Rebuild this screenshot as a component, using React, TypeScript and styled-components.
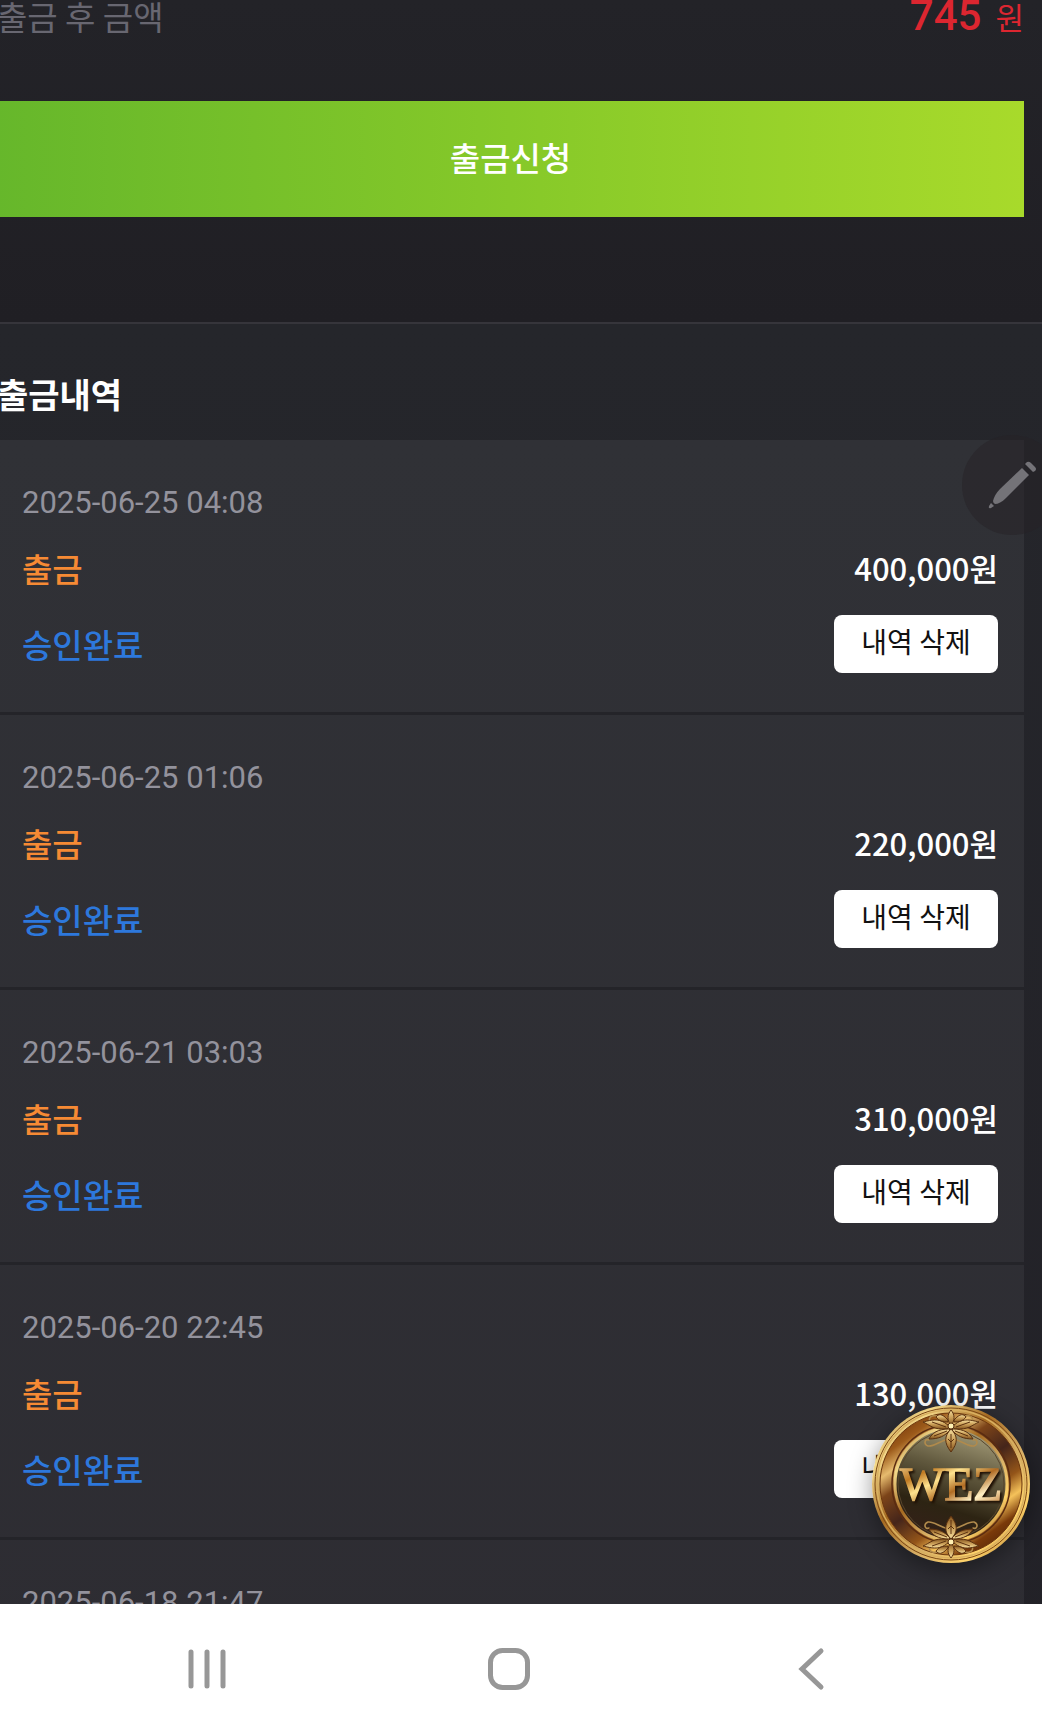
import React from "react";
import styled, { createGlobalStyle } from "styled-components";

const sans = `"Noto Sans CJK KR", "Noto Sans", sans-serif`;
const latin = `Roboto, "Noto Sans CJK KR", sans-serif`;

const GlobalStyle = createGlobalStyle`
  *, *::before, *::after { box-sizing: border-box; }
  body { margin: 0; background: #232429; font-family: ${sans}; }
  button { font: inherit; border: 0; padding: 0; cursor: pointer; }
`;

const Screen = styled.div`
  display: flex;
  flex-direction: column;
  height: 100vh;
  overflow: hidden;
`;

const Stage = styled.main`
  position: relative;
  flex: 1;
  min-height: 0;
  overflow: hidden;
  background: #232429;
`;

/* The page is panned slightly past its left edge. */
const Page = styled.div`
  margin-left: -3px;
`;

const RequestPanel = styled.section`
  display: flex;
  flex-direction: column;
  padding: 0 18px 105px 0;
  background: linear-gradient(#232328, #201f24);
  border-bottom: 2px solid #36353b;
`;

const BalanceRow = styled.div`
  display: flex;
  align-items: center;
  justify-content: space-between;
  height: 32px;
  margin-bottom: 69px;
`;

const BalanceLabel = styled.span`
  font-size: 33px;
  line-height: 32px;
  color: #686771;
`;

const Balance = styled.strong`
  font-family: ${latin};
  font-size: 42px;
  line-height: 28px;
  font-weight: 500;
  color: #dc2630;
`;

const BalanceUnit = styled.span`
  margin-left: 14px;
  font-family: ${sans};
  font-size: 31px;
  font-weight: 400;
`;

const SubmitButton = styled.button`
  height: 116px;
  padding-bottom: 4px;
  background: linear-gradient(90deg, #66b72b, #86c929 50%, #a8da2b);
  color: #fff;
  font-size: 33px;
  font-weight: 500;
`;

const HistoryPanel = styled.section`
  padding-right: 18px;
  background: linear-gradient(#25262b, #222127);
`;

const HistoryTitle = styled.h2`
  margin: 0;
  padding: 46px 0 22px;
  font-size: 34px;
  line-height: 48px;
  font-weight: 700;
  color: #fff;
`;

const HistoryList = styled.ul`
  margin: 0;
  padding: 0;
  list-style: none;
  background: linear-gradient(#303136, #2d2c32);
`;

const HistoryItem = styled.li`
  display: flex;
  flex-direction: column;
  gap: 22px;
  padding: 44px 26px 38px 25px;
  border-bottom: 3px solid #242429;
`;

const DateText = styled.time`
  font-family: ${latin};
  font-size: 31px;
  line-height: 38px;
  color: #93929c;
`;

const ItemRow = styled.div<{ $height: number }>`
  display: flex;
  align-items: center;
  justify-content: space-between;
  height: ${(p) => p.$height}px;
  font-size: 33px;
  line-height: 48px;
  font-weight: 500;
`;

const Kind = styled.span`
  color: #f68a34;
`;

const Status = styled.span`
  color: #2d78dc;
`;

const Amount = styled.span`
  font-size: 31px;
  color: #fff;
`;

const DeleteButton = styled.button`
  width: 164px;
  height: 58px;
  padding-bottom: 6px;
  border-radius: 8px;
  background: #fff;
  color: #111;
  font-size: 28px;
  font-weight: 400;
  line-height: 40px;
`;

const PenButton = styled.button`
  position: absolute;
  top: 435px;
  right: -20px;
  width: 100px;
  height: 100px;
  border-radius: 50%;
  background: rgba(38, 34, 37, 0.5);
`;

const LogoButton = styled.button`
  position: absolute;
  right: 12px;
  bottom: 41px;
  width: 158px;
  height: 158px;
  border-radius: 50%;
  background: none;
  box-shadow: 0 6px 24px rgba(0, 0, 0, 0.4);
`;

const Drawing = styled.svg`
  display: block;
  width: 100%;
  height: 100%;
  overflow: visible;
`;

const Monogram = styled.text`
  font-family: "Liberation Serif", serif;
  font-size: 47px;
  text-anchor: middle;
  filter: drop-shadow(2px 2px 1px #1f1004);
`;

const NavBar = styled.nav`
  display: grid;
  grid-template-columns: repeat(3, 1fr);
  flex: none;
  height: 126px;
  padding: 4px 80px 0 56px;
  background: #fff;
`;

const NavButton = styled.button`
  display: grid;
  place-items: center;
  background: none;
  color: #979797;
`;

const NavIcon = styled.svg`
  width: 44px;
  height: 44px;
  fill: none;
  stroke: currentColor;
  stroke-width: 5;
`;

const withdrawals = [
  { date: "2025-06-25 04:08", amount: "400,000원" },
  { date: "2025-06-25 01:06", amount: "220,000원" },
  { date: "2025-06-21 03:03", amount: "310,000원" },
  { date: "2025-06-20 22:45", amount: "130,000원" },
  { date: "2025-06-18 21:47", amount: "150,000원" },
];

function Ornament() {
  return (
    <g stroke="#5a3110" strokeWidth="1">
      <g fill="none" stroke="#b08a4c" strokeWidth="1.6" strokeLinecap="round">
        <path d="M77 34C67 36 62 42 56 41C51 39 53 33 57 35M81 34C91 36 96 42 102 41C107 39 105 33 101 35" />
        <path d="M71 14C63 8 55 11 58 17M87 14C95 8 103 11 100 17" />
      </g>
      <path d="M78 22C68 12 60 15 51 17C58 20 61 25 75 24ZM80 22C90 12 98 15 107 17C100 20 97 25 83 24Z" fill="url(#leaf)" />
      <path d="M77 24C66 24 60 28 57 34C67 34 73 31 78 25ZM81 24C92 24 98 28 101 34C91 34 85 31 80 25Z" fill="url(#leaf)" />
      <path d="M79 24C72 31 72 38 79 47C86 38 86 31 79 24Z" fill="url(#leaf)" />
      <path d="M79 5C75 10 75 15 79 21C83 15 83 10 79 5Z" fill="url(#leaf)" />
      <path d="M76 15C70 8 66 9 64 12C67 16 71 17 76 17ZM82 15C88 8 92 9 94 12C91 16 87 17 82 17Z" fill="url(#leaf)" />
      <circle cx="79" cy="21" r="3" fill="#fff0b2" />
      <path d="M79 29V43M76 34L79 37L82 34M60 17L74 22M98 17L84 22M62 31L75 26M96 31L83 26" fill="none" />
    </g>
  );
}

function Medallion() {
  return (
    <Drawing viewBox="0 0 158 158" aria-hidden="true">
      <defs>
        <linearGradient id="rim" x1="0" y1="0" x2="1" y2="1">
          <stop offset="0" stopColor="#9a6a28" />
          <stop offset="0.2" stopColor="#f4d98a" />
          <stop offset="0.4" stopColor="#a56a21" />
          <stop offset="0.62" stopColor="#d8b067" />
          <stop offset="0.8" stopColor="#ffd36a" />
          <stop offset="1" stopColor="#7e430c" />
        </linearGradient>
        <linearGradient id="band" x1="0.15" y1="0" x2="0.85" y2="1">
          <stop offset="0" stopColor="#6c2f08" />
          <stop offset="0.14" stopColor="#9c5a1a" />
          <stop offset="0.24" stopColor="#e6bb6e" />
          <stop offset="0.34" stopColor="#7c4419" />
          <stop offset="0.5" stopColor="#45251a" />
          <stop offset="0.66" stopColor="#945519" />
          <stop offset="0.76" stopColor="#f5c25a" />
          <stop offset="0.86" stopColor="#7a3a0a" />
          <stop offset="1" stopColor="#4b2006" />
        </linearGradient>
        <linearGradient id="face" x1="0.6" y1="0" x2="0.3" y2="1">
          <stop offset="0" stopColor="#a39b78" />
          <stop offset="0.35" stopColor="#625a3f" />
          <stop offset="0.7" stopColor="#2d2413" />
          <stop offset="1" stopColor="#352019" />
        </linearGradient>
        <linearGradient id="leaf" x1="0" y1="0" x2="0" y2="1">
          <stop offset="0" stopColor="#f6e0a0" />
          <stop offset="0.5" stopColor="#c89c55" />
          <stop offset="1" stopColor="#80501c" />
        </linearGradient>
        <linearGradient id="letters" x1="0" y1="0" x2="1" y2="1">
          <stop offset="0" stopColor="#f6dfa8" />
          <stop offset="0.25" stopColor="#c07a22" />
          <stop offset="0.4" stopColor="#ffe38f" />
          <stop offset="0.58" stopColor="#b06b23" />
          <stop offset="0.75" stopColor="#fff0c4" />
          <stop offset="1" stopColor="#b3651d" />
        </linearGradient>
      </defs>
      <circle cx="79" cy="79" r="79" fill="url(#rim)" />
      <circle cx="79" cy="79" r="76" fill="none" stroke="#7b4714" strokeWidth="1" />
      <circle cx="79" cy="79" r="74" fill="none" stroke="#d9b060" strokeWidth="1.5" />
      <circle cx="79" cy="79" r="71" fill="url(#band)" stroke="#6b360d" />
      <circle cx="79" cy="79" r="59" fill="none" stroke="#5a2b10" strokeWidth="1.5" />
      <circle cx="79" cy="79" r="56" fill="url(#face)" stroke="url(#rim)" strokeWidth="3" />
      <circle cx="79" cy="79" r="53" fill="none" stroke="#57452c" strokeWidth="1" />
      <Ornament />
      <g transform="matrix(1 0 0 -1 0 158)">
        <Ornament />
      </g>
      <Monogram x="79" y="95" fill="url(#letters)" stroke="url(#letters)" strokeWidth="1.6">
        WEZ
      </Monogram>
    </Drawing>
  );
}

export default function App() {
  return (
    <Screen>
      <GlobalStyle />
      <Stage>
        <Page>
          <RequestPanel>
            <BalanceRow>
              <BalanceLabel>출금 후 금액</BalanceLabel>
              <Balance>
                745<BalanceUnit>원</BalanceUnit>
              </Balance>
            </BalanceRow>
            <SubmitButton type="button">출금신청</SubmitButton>
          </RequestPanel>
          <HistoryPanel>
            <HistoryTitle>출금내역</HistoryTitle>
            <HistoryList>
              {withdrawals.map((item) => (
                <HistoryItem key={item.date}>
                  <DateText>{item.date}</DateText>
                  <ItemRow $height={48}>
                    <Kind>출금</Kind>
                    <Amount>{item.amount}</Amount>
                  </ItemRow>
                  <ItemRow $height={60}>
                    <Status>승인완료</Status>
                    <DeleteButton type="button">내역 삭제</DeleteButton>
                  </ItemRow>
                </HistoryItem>
              ))}
            </HistoryList>
          </HistoryPanel>
        </Page>
        <PenButton type="button" aria-label="펜">
          <Drawing viewBox="0 0 100 100" fill="#747378" aria-hidden="true">
            <path d="M60 33L67 40L44 63C40 67 36 69 33 69Q31 68 31 66C32 62 34 58 38 54Z" />
            <path d="M63 29L65 27Q67 26 69 28L73 32Q75 34 73 36L71 37Z" />
            <path d="M29 68L32 71L29 73Q26 74 27 71Z" />
          </Drawing>
        </PenButton>
        <LogoButton type="button" aria-label="WEZ">
          <Medallion />
        </LogoButton>
      </Stage>
      <NavBar>
        <NavButton type="button" aria-label="최근 앱">
          <NavIcon viewBox="0 0 44 44" strokeLinecap="round">
            <path d="M6 5V39M22 5V39M38 5V39" />
          </NavIcon>
        </NavButton>
        <NavButton type="button" aria-label="홈">
          <NavIcon viewBox="0 0 44 44">
            <rect x="3.5" y="3.5" width="37" height="37" rx="12" />
          </NavIcon>
        </NavButton>
        <NavButton type="button" aria-label="뒤로">
          <NavIcon viewBox="0 0 44 44" strokeLinecap="round">
            <path d="M32 4L13 22L32 40" />
          </NavIcon>
        </NavButton>
      </NavBar>
    </Screen>
  );
}
